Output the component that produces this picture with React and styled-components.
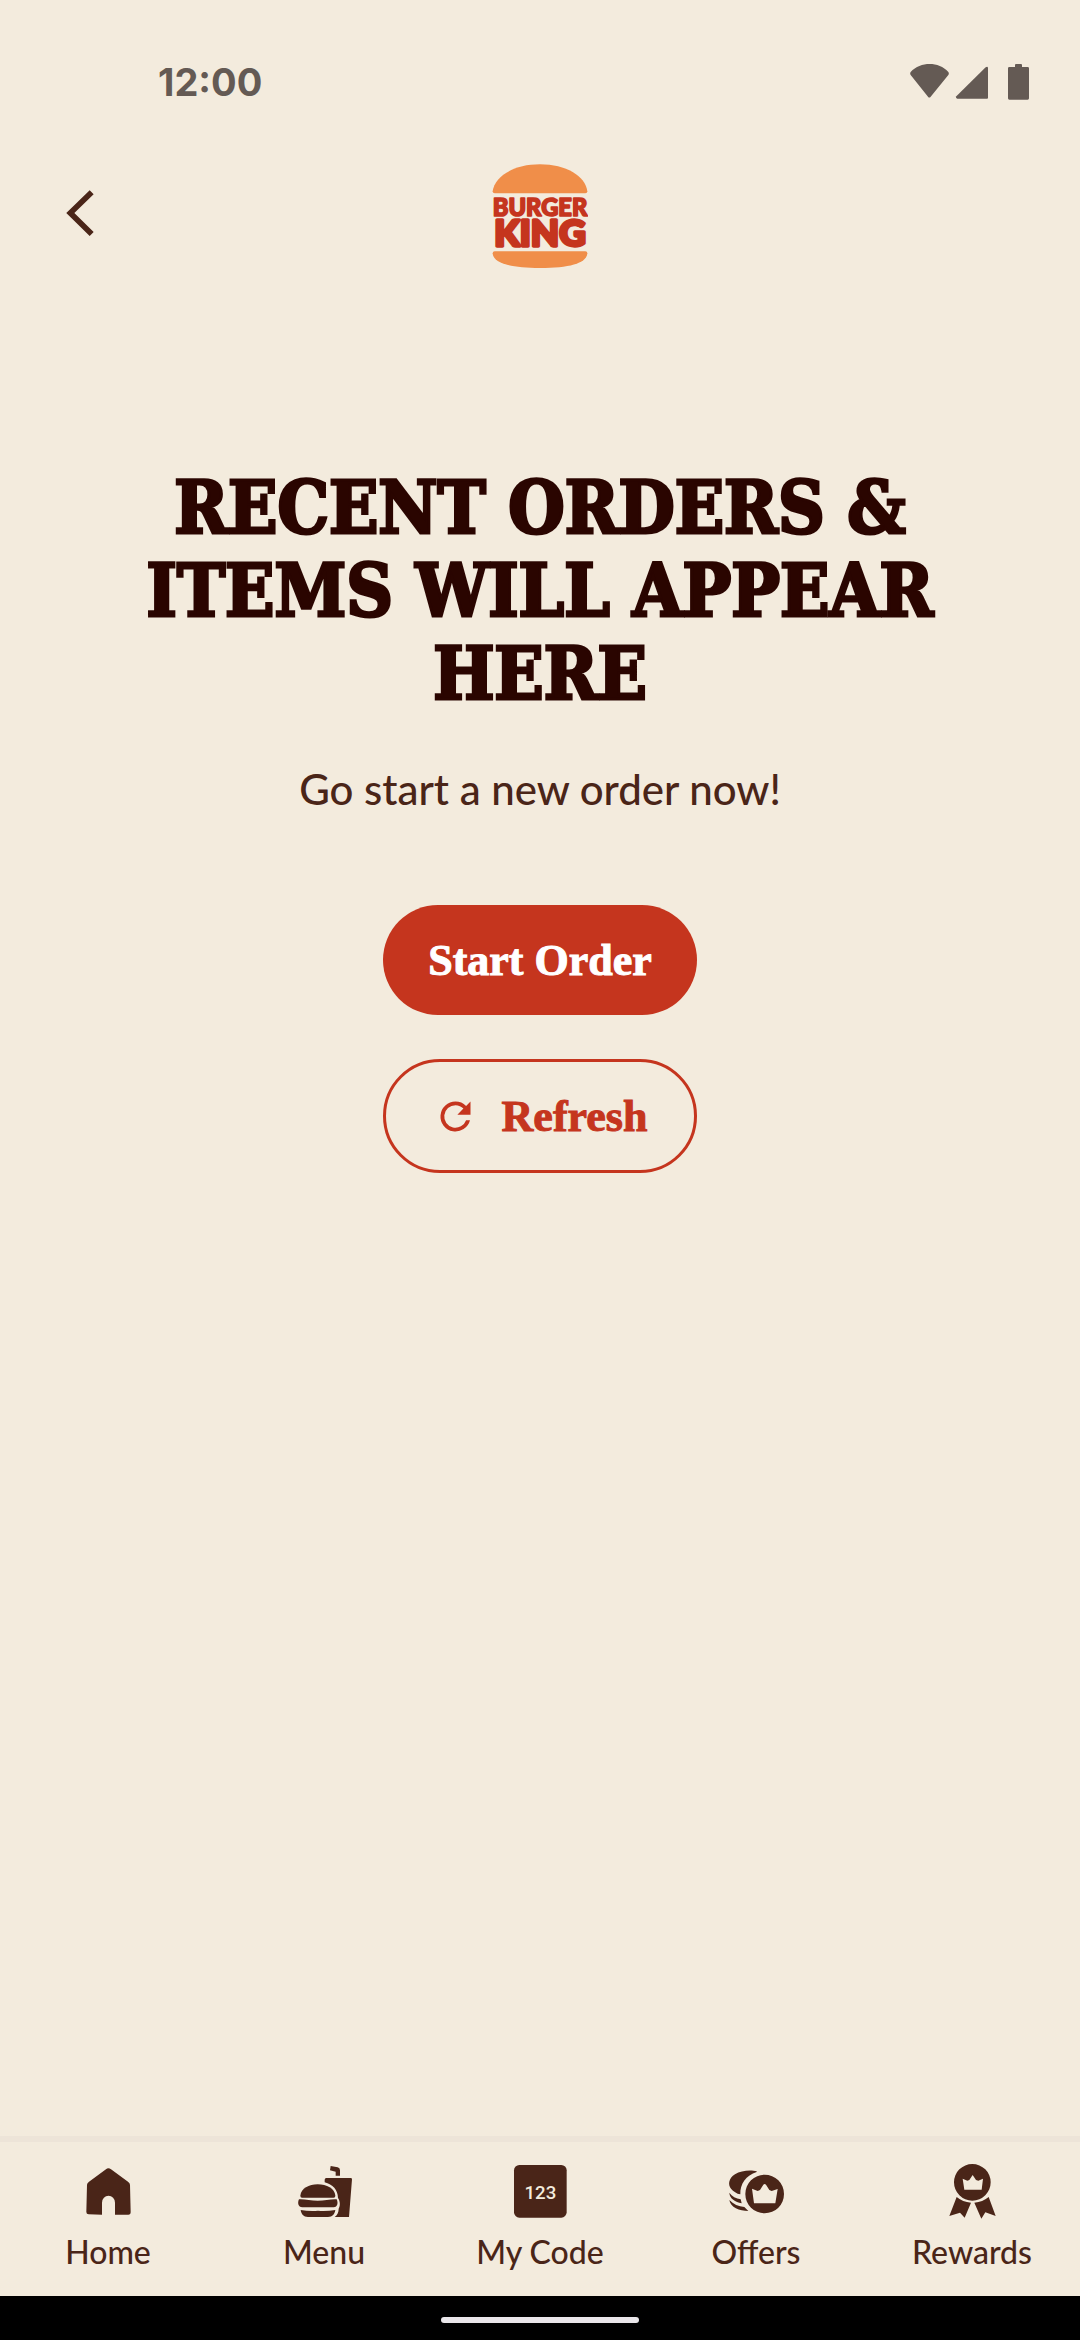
import styled, { createGlobalStyle } from "styled-components";

const GlobalStyle = createGlobalStyle`
  * {
    box-sizing: border-box;
  }
  body {
    margin: 0;
    background-color: #f3ebdd;
    color: #4a2518;
    font-family: "Lato", "Liberation Sans", sans-serif;
  }
`;

const Container = styled.div`
  display: flex;
  flex-direction: column;
  min-height: 100vh;
`;

const StatusBar = styled.div`
  display: flex;
  justify-content: space-between;
  align-items: center;
  height: 164px;
  padding: 0 50px 0 158px;
  color: #645a54;
`;

const Clock = styled.time`
  font-family: "Inter", sans-serif;
  font-size: 38px;
  font-weight: 700;
`;

const Header = styled.header`
  display: grid;
  grid-template-columns: 1fr auto 1fr;
  align-items: center;
  padding: 0 48px;
`;

const BackButton = styled.button`
  display: flex;
  justify-self: start;
  padding: 12px 18px 18px;
  border: none;
  background: none;
  color: inherit;
  cursor: pointer;
`;

const LogoText = styled.text`
  font-family: "Lato", sans-serif;
  font-size: ${(props) => props.$size}px;
  font-weight: 900;
  text-anchor: middle;
  fill: #c5351e;
  stroke: #c5351e;
  stroke-width: ${(props) => props.$stroke}px;
  stroke-linejoin: round;
`;

const Main = styled.main`
  flex: 1;
  display: flex;
  flex-direction: column;
  align-items: center;
  padding: 198px 96px 0;
  text-align: center;
`;

const Title = styled.h1`
  margin: 0;
  color: #2a0500;
  font-family: "DejaVu Serif Condensed", "DejaVu Serif", serif;
  font-size: 72px;
  font-weight: 700;
  line-height: 83px;
  text-transform: uppercase;
  -webkit-text-stroke: 3px #2a0500;
`;

const Desc = styled.p`
  margin: 44px 0 86px;
  font-size: 42px;
  font-weight: 500;
  line-height: 60px;
`;

const Actions = styled.div`
  display: flex;
  flex-direction: column;
  align-items: center;
  gap: 44px;
`;

const Button = styled.button`
  display: flex;
  justify-content: center;
  align-items: center;
  gap: 24px;
  height: ${(props) => (props.$outlined ? "114px" : "110px")};
  min-width: 314px;
  padding: 0 36px;
  border: ${(props) => (props.$outlined ? "3px solid #c5351e" : "none")};
  border-radius: 57px;
  background-color: ${(props) => (props.$outlined ? "transparent" : "#c5351e")};
  color: ${(props) => (props.$outlined ? "#c5351e" : "#fff")};
  font-family: "Liberation Serif", serif;
  font-size: 44px;
  font-weight: 700;
  -webkit-text-stroke: 1px currentColor;
  cursor: pointer;
`;

const Nav = styled.nav`
  display: flex;
  height: 160px;
  border-top: 6px solid #ede4d8;
`;

const NavItem = styled.a`
  flex: 1;
  display: flex;
  flex-direction: column;
  align-items: center;
  gap: 8px;
  padding-top: 20px;
  color: inherit;
  font-size: 32px;
  font-weight: 500;
  line-height: 44px;
  text-decoration: none;
`;

const CodeText = styled.text`
  font-family: "Roboto", sans-serif;
  font-size: 56px;
  font-weight: 500;
  text-anchor: middle;
  fill: #f3ebdd;
`;

const GestureBar = styled.div`
  display: flex;
  justify-content: center;
  align-items: center;
  height: 44px;
  padding-top: 4px;
  background-color: #000;
`;

const GesturePill = styled.div`
  width: 198px;
  height: 6px;
  border-radius: 3px;
  background-color: #e9e6ea;
`;

const StatusIcons = () => (
  <svg width="120" height="36" viewBox="0 0 360 108" fill="currentColor">
    <path d="M2 24C32-8 86-8 115 24Q118 28 115 33L62 98Q58 103 54 98L2 33Q-1 28 2 24Z" />
    <path d="M139 97L227 10Q233 5 234 12V101Q234 104 231 104H142Q136 103 139 97Z" />
    <path d="M315 9V3Q315 0 318 0H333Q336 0 336 3V9H353Q357 9 357 13V103Q357 107 353 107H298Q294 107 294 103V13Q294 9 298 9Z" />
  </svg>
);

const BackIcon = () => (
  <svg width="28" height="46" viewBox="0 0 84 138" fill="none" stroke="currentColor" strokeWidth="17">
    <path d="M77 7L13 69L77 132" />
  </svg>
);

const Logo = () => (
  <svg width="96" height="104" viewBox="0 0 288 312" role="img">
    <path
      fill="#f08e49"
      d="M2 82C8 36 66 1 144 1C222 1 280 36 286 82Q286 88 280 88H8Q2 88 2 82Z"
    />
    <LogoText x="144" y="156" $size={71} $stroke={5}>
      BURGER
    </LogoText>
    <LogoText x="144" y="247" $size={110} $stroke={10}>
      KING
    </LogoText>
    <path
      fill="#f08e49"
      d="M8 262H280Q286 262 286 268C284 298 232 312 144 312C56 312 4 298 2 268Q2 262 8 262Z"
    />
  </svg>
);

const RefreshIcon = () => (
  <svg width="45" height="45" viewBox="0 0 24 24" fill="currentColor">
    <path d="M17.65 6.35A7.96 7.96 0 0 0 12 4a8 8 0 1 0 7.73 10h-2.08A6 6 0 1 1 12 6c1.66 0 3.14.69 4.22 1.78L13 11h7V4z" />
  </svg>
);

const HomeIcon = () => (
  <path d="M91 19Q95 19 99 22L150 59Q156 63 156 69L158 150Q158 158 151 158H111V122A19 20 0 0 0 72 122V158L32 157Q25 157 25 150L27 69Q27 63 33 59L84 22Q87 19 91 19Z" />
);

const MenuIcon = () => (
  <>
    <path d="M19 101C21 79 45 67 71 67C98 67 122 79 124 101Q124 107 119 107H24Q19 107 19 101Z" />
    <path d="M15 112C32 111 50 116 71 116C92 116 111 111 128 112C133 122 131 136 119 136H25C12 136 10 122 15 112Z" />
    <path d="M20 144Q46 148 72 146Q98 148 124 144C122 156 116 165 102 165H42C28 165 22 156 20 144Z" />
    <path d="M92 53Q92 48 97 48H170Q174 48 174 52L165 165H122C130 160 134 150 134 140C139 132 139 118 132 108C132 84 116 67 92 61Z" />
    <path d="M110 12L131 16Q138 18 138 25V41H125V29L108 25Z" />
  </>
);

const CodeIcon = () => (
  <>
    <rect x="12" y="9" width="158" height="158" rx="16" />
    <CodeText x="91" y="111">
      123
    </CodeText>
  </>
);

const OffersIcon = () => (
  <>
    <path d="M92 28C75 23 45 25 27 37C8 49 5 68 15 80C22 88 32 95 43 97C42 66 60 40 92 30Z" />
    <path d="M10 92C18 104 30 109 44 112L47 124C28 120 11 110 10 92Z" />
    <path d="M10 114C22 127 38 134 55 135L67 147C40 147 13 136 10 114Z" />
    <path
      fillRule="evenodd"
      d="M116 38a58 58 0 1 0 0 116a58 58 0 1 0 0-116ZM78 80L95 87L102 84L112 68Q116 64 120 68L130 84L137 87L155 81L148 124H84Z"
    />
  </>
);

const RewardsIcon = () => (
  <>
    <path
      fillRule="evenodd"
      d="M91 6a55 55 0 1 0 0 110a55 55 0 1 0 0-110ZM62 50L76 56L82 54L92 39L102 54L109 56L123 50L119 83H67Z"
    />
    <path d="M44 105Q62 120 87 122L68 167L54 152L22 162Z" />
    <path d="M140 105Q122 120 97 122L118 170L130 151L161 162Z" />
  </>
);

const navItems = [
  { label: "Home", Icon: HomeIcon },
  { label: "Menu", Icon: MenuIcon },
  { label: "My Code", Icon: CodeIcon },
  { label: "Offers", Icon: OffersIcon },
  { label: "Rewards", Icon: RewardsIcon },
];

export default function App() {
  return (
    <>
      <GlobalStyle />
      <Container>
        <StatusBar>
          <Clock>12:00</Clock>
          <StatusIcons />
        </StatusBar>
        <Header>
          <BackButton type="button" aria-label="Back">
            <BackIcon />
          </BackButton>
          <Logo />
        </Header>
        <Main>
          <Title>Recent orders & items will appear here</Title>
          <Desc>Go start a new order now!</Desc>
          <Actions>
            <Button type="button">Start Order</Button>
            <Button type="button" $outlined>
              <RefreshIcon />
              Refresh
            </Button>
          </Actions>
        </Main>
        <Nav>
          {navItems.map(({ label, Icon }) => (
            <NavItem key={label} href="#">
              <svg width="60" height="60" viewBox="0 0 180 180" fill="currentColor">
                <Icon />
              </svg>
              {label}
            </NavItem>
          ))}
        </Nav>
        <GestureBar>
          <GesturePill />
        </GestureBar>
      </Container>
    </>
  );
}
